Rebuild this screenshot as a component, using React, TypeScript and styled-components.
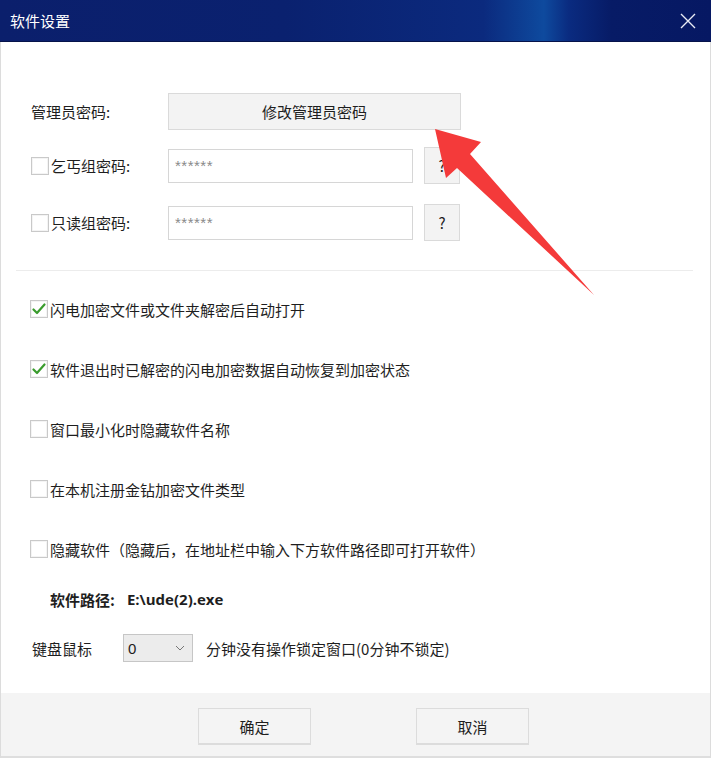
import React from 'react';
import styled, { createGlobalStyle } from 'styled-components';

const GlobalStyle = createGlobalStyle`
  html, body {
    margin: 0;
    padding: 0;
    background: #ffffff;
  }
  body {
    font-family: "Noto Sans CJK SC", "Noto Sans", "Liberation Sans", sans-serif;
    color: #1e1e1e;
  }
`;

const Window = styled.div`
  position: relative;
  width: 711px;
  height: 758px;
  display: flex;
  flex-direction: column;
  background: #ffffff;
  overflow: hidden;
`;

const TitleBar = styled.div`
  height: 42px;
  flex: none;
  display: flex;
  align-items: center;
  justify-content: space-between;
  padding: 0 10px;
  background: linear-gradient(
    90deg,
    #0b1f6c 0%,
    #0a216f 40%,
    #0b2a7e 68%,
    #0e4a9e 76.5%,
    #0a2b80 80%,
    #071b66 86%,
    #061863 100%
  );
  border-bottom: 1px solid #06134a;
  box-sizing: border-box;
`;

const Title = styled.span`
  color: #ffffff;
  font-size: 15px;
`;

const CloseButton = styled.button`
  width: 24px;
  height: 24px;
  padding: 0;
  margin-right: 1px;
  border: none;
  background: transparent;
  display: flex;
  align-items: center;
  justify-content: center;
  cursor: pointer;
`;

const Body = styled.div`
  flex: 1;
  display: flex;
  flex-direction: column;
  border-left: 1px solid #dcdcdc;
  border-right: 1px solid #dcdcdc;
`;

const Section = styled.div`
  display: flex;
  flex-direction: column;
  padding: 51px 0 0 29px;
`;

const FieldRow = styled.div<{ $top?: number }>`
  display: flex;
  align-items: center;
  height: 37px;
  margin-top: ${({ $top }) => $top ?? 0}px;
`;

const FieldLabel = styled.div`
  width: 137px;
  display: flex;
  align-items: center;
  font-size: 15px;
  padding-left: 1px;
`;

const GrayButton = styled.button<{ $w: number; $h?: number }>`
  width: ${({ $w }) => $w}px;
  height: ${({ $h }) => $h ?? 37}px;
  background: #f3f3f3;
  border: 1px solid #dadada;
  font-family: inherit;
  font-size: 15px;
  color: #1e1e1e;
  padding: 0;
  cursor: pointer;
`;

const TextBox = styled.input`
  width: 245px;
  height: 34px;
  box-sizing: border-box;
  border: 1px solid #d6d6d6;
  padding: 0 6px;
  font-family: "Liberation Sans", sans-serif;
  font-size: 15px;
  color: #888;
  margin-right: 11px;
  outline: none;
  &::placeholder {
    color: #8a8a8a;
    letter-spacing: 0.5px;
  }
`;

const Box = styled.span`
  width: 16px;
  height: 16px;
  flex: none;
  border: 1px solid #c9c9c9;
  background: #ffffff;
  display: inline-flex;
  align-items: center;
  justify-content: center;
  margin-right: 2px;
  box-shadow: inset 0 0 0 1px #f4f4f4;
`;

const Divider = styled.hr`
  margin: 29px 17px 0 15px;
  border: none;
  border-top: 1px solid #ececec;
`;

const Options = styled.div`
  display: flex;
  flex-direction: column;
  padding: 8px 0 0 29px;
`;

const OptionRow = styled.label`
  height: 60px;
  display: flex;
  align-items: center;
  font-size: 15px;
  cursor: pointer;
`;

const PathRow = styled.div`
  height: 40px;
  display: flex;
  align-items: center;
  padding-left: 20px;
  font-size: 15px;
  font-weight: 700;
  gap: 12px;
`;

const PathValue = styled.span`
  font-family: "Open Sans", "Noto Sans", sans-serif;
  font-weight: 700;
  font-size: 15px;
`;

const LockRow = styled.div`
  height: 58px;
  display: flex;
  align-items: center;
  font-size: 15px;
  padding-left: 2px;
`;

const LockLabel = styled.span`
  width: 91px;
`;

const Select = styled.div`
  width: 70px;
  height: 28px;
  box-sizing: border-box;
  border: 1px solid #c6c6c6;
  background: #ececec;
  display: flex;
  align-items: center;
  justify-content: space-between;
  padding: 0 7px 0 4px;
  font-family: "Liberation Sans", sans-serif;
  font-size: 15px;
  margin-right: 13px;
`;

const Footer = styled.div`
  margin-top: auto;
  height: 65px;
  background: #f4f4f4;
  border-left: 1px solid #dcdcdc;
  border-right: 1px solid #dcdcdc;
  border-bottom: 2px solid #dedede;
  display: flex;
  align-items: flex-start;
  justify-content: center;
  gap: 105px;
  padding-top: 15px;
  padding-left: 16px;
  box-sizing: border-box;
`;

const FooterButton = styled.button`
  width: 113px;
  height: 37px;
  background: #f4f4f4;
  border: 1px solid #dcdcdc;
  border-bottom-width: 2px;
  font-family: inherit;
  font-size: 15px;
  color: #1e1e1e;
  cursor: pointer;
`;

const ArrowLayer = styled.svg`
  position: absolute;
  left: 0;
  top: 0;
  pointer-events: none;
`;

function Check({ checked }: { checked?: boolean }) {
  return (
    <Box>
      {checked && (
        <svg width="14" height="12" viewBox="0 0 14 12">
          <path d="M1.5 6.5 L5 10 L12.5 1.5" fill="none" stroke="#3a9c2e" strokeWidth="2.2" strokeLinecap="round" strokeLinejoin="round" />
        </svg>
      )}
    </Box>
  );
}

const options = [
  { text: '闪电加密文件或文件夹解密后自动打开', checked: true },
  { text: '软件退出时已解密的闪电加密数据自动恢复到加密状态', checked: true },
  { text: '窗口最小化时隐藏软件名称', checked: false },
  { text: '在本机注册金钻加密文件类型', checked: false },
  { text: '隐藏软件（隐藏后，在地址栏中输入下方软件路径即可打开软件）', checked: false },
];

export default function App() {
  return (
    <>
      <GlobalStyle />
      <Window>
        <TitleBar>
          <Title>软件设置</Title>
          <CloseButton aria-label="关闭">
            <svg width="18" height="18" viewBox="0 0 18 18">
              <path d="M2 2 L16 16 M16 2 L2 16" stroke="#e8ecf5" strokeWidth="1.4" />
            </svg>
          </CloseButton>
        </TitleBar>
        <Body>
          <Section>
            <FieldRow>
              <FieldLabel>管理员密码:</FieldLabel>
              <GrayButton $w={293}>修改管理员密码</GrayButton>
            </FieldRow>
            <FieldRow $top={17}>
              <FieldLabel>
                <Check />
                乞丐组密码:
              </FieldLabel>
              <TextBox placeholder="******" />
              <GrayButton $w={36}>?</GrayButton>
            </FieldRow>
            <FieldRow $top={20}>
              <FieldLabel>
                <Check />
                只读组密码:
              </FieldLabel>
              <TextBox placeholder="******" />
              <GrayButton $w={36}>?</GrayButton>
            </FieldRow>
          </Section>
          <Divider />
          <Options>
            {options.map((o) => (
              <OptionRow key={o.text}>
                <Check checked={o.checked} />
                {o.text}
              </OptionRow>
            ))}
            <PathRow>
              <span>软件路径:</span>
              <PathValue>E:\ude(2).exe</PathValue>
            </PathRow>
            <LockRow>
              <LockLabel>键盘鼠标</LockLabel>
              <Select>
                <span>0</span>
                <svg width="10" height="6" viewBox="0 0 10 6">
                  <path d="M1 1 L5 5 L9 1" fill="none" stroke="#777" strokeWidth="1" />
                </svg>
              </Select>
              <span>分钟没有操作锁定窗口(0分钟不锁定)</span>
            </LockRow>
          </Options>
        </Body>
        <Footer>
          <FooterButton>确定</FooterButton>
          <FooterButton>取消</FooterButton>
        </Footer>
        <ArrowLayer width="711" height="758" viewBox="0 0 711 758">
          <polygon points="435,129 481,142 470,154 594,295 457,168 446,178" fill="#f43a3a" />
        </ArrowLayer>
      </Window>
    </>
  );
}
